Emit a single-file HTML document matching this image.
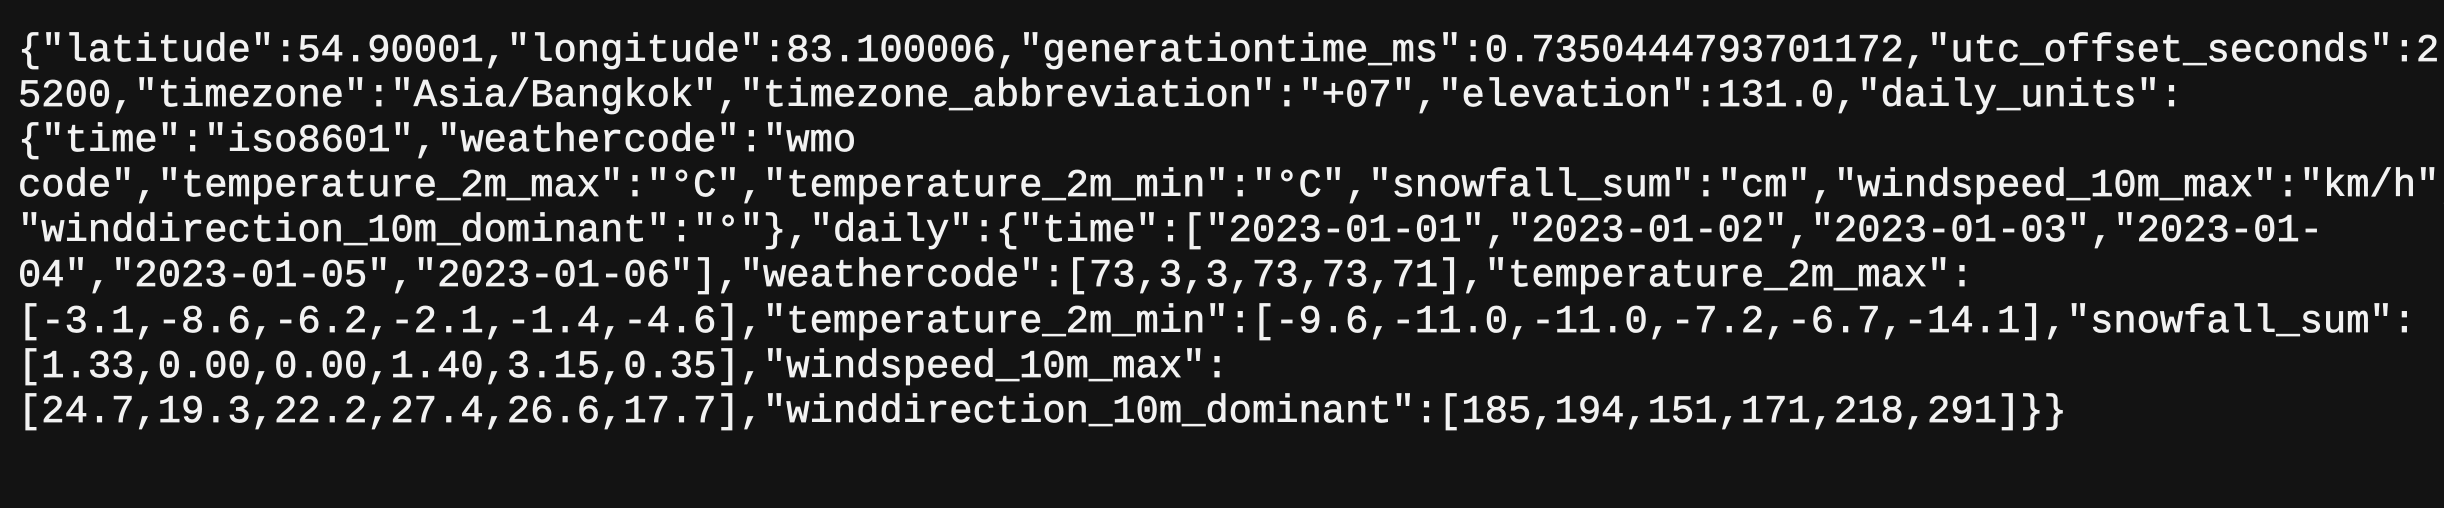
<!DOCTYPE html>
<html><head><meta charset="utf-8"><style>
html,body{margin:0;padding:0;background:#131313;width:2444px;height:508px;overflow:hidden}
pre{margin:0;padding:29px 0 0 18px;font-family:"Liberation Mono","Courier New",monospace;font-size:38.8px;line-height:45.1px;color:#f2f2f2;white-space:pre;-webkit-text-stroke:0.7px #f2f2f2}
</style></head><body><pre>{"latitude":54.90001,"longitude":83.100006,"generationtime_ms":0.7350444793701172,"utc_offset_seconds":2
5200,"timezone":"Asia/Bangkok","timezone_abbreviation":"+07","elevation":131.0,"daily_units":
{"time":"iso8601","weathercode":"wmo
code","temperature_2m_max":"°C","temperature_2m_min":"°C","snowfall_sum":"cm","windspeed_10m_max":"km/h",
"winddirection_10m_dominant":"°"},"daily":{"time":["2023-01-01","2023-01-02","2023-01-03","2023-01-
04","2023-01-05","2023-01-06"],"weathercode":[73,3,3,73,73,71],"temperature_2m_max":
[-3.1,-8.6,-6.2,-2.1,-1.4,-4.6],"temperature_2m_min":[-9.6,-11.0,-11.0,-7.2,-6.7,-14.1],"snowfall_sum":
[1.33,0.00,0.00,1.40,3.15,0.35],"windspeed_10m_max":
[24.7,19.3,22.2,27.4,26.6,17.7],"winddirection_10m_dominant":[185,194,151,171,218,291]}}</pre></body></html>
